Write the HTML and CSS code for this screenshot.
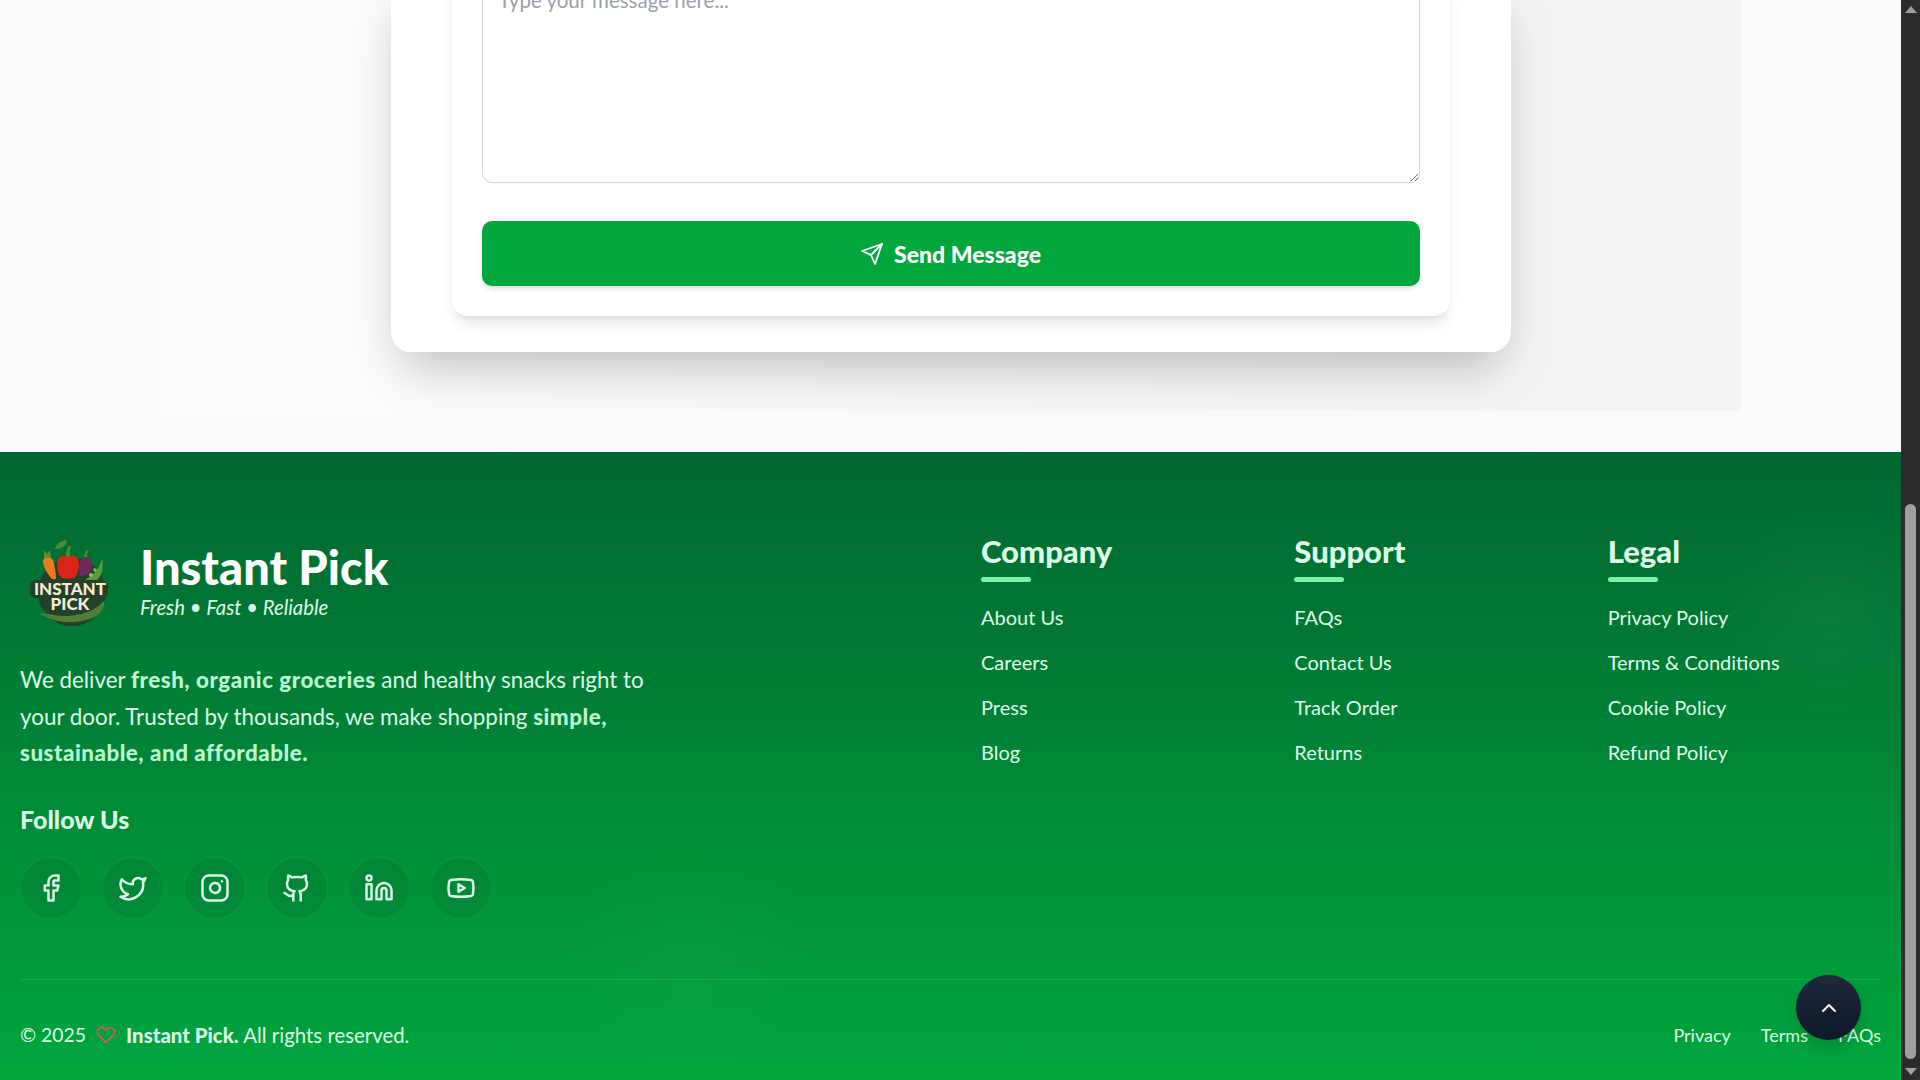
FILE: index.html
```html
<!DOCTYPE html>
<html>
<head>
    <title>Contact - Instant Pick</title>
    <meta charset="UTF-8">
    <link rel="stylesheet" href="styles.css">
</head>
<body>
    <div class="page">
        <main class="content">
            <section class="contact">
                <div class="contact-card">
                    <form class="contact-form">
                        <textarea class="message" placeholder="Type your message here..."></textarea>
                        <button class="send-btn" type="button">
                            <svg class="send-icon" viewBox="0 0 24 24"><path d="m22 2-7 20-4-9-9-4Z"/><path d="M22 2 11 13"/></svg>
                            Send Message
                        </button>
                    </form>
                </div>
            </section>
        </main>

        <footer class="footer">
            <div class="footer-grid">
                <div class="about">
                    <div class="brand">
                        <svg class="logo" viewBox="0 0 96 96">
                            <path d="M35 15c1-5 5-8 12-9-1 6-5 9-12 9z" fill="#4d8a3a"/>
                            <circle cx="52" cy="58" r="34" fill="#23402a"/>
                            <path d="M20 80c4-2 8 0 14 1 18 3 38-1 50-14 1 5-2 12-8 15-14 8-38 9-56-2z" fill="#4f7d33"/>
                            <path d="M24 25l0-9 3 4 3-4 1 9z" fill="#5b8f2e"/>
                            <path d="M23 26c3-3 8-3 10 0 2 7 3 13 3 19-2 1-4 0-5-1-4-5-8-11-8-18z" fill="#ee7a1f"/>
                            <path d="M46 23c0-4 1-8 2-11l3 0c-1 3-1 7-1 11z" fill="#4f8a2e"/>
                            <path d="M37 30c0-6 4-9 8-8 2 1 5 1 7 0 4-1 7 2 7 8 0 6-2 12-5 14-3 1-9 1-12 0-3-2-5-8-5-14z" fill="#d92418"/>
                            <path d="M64 23c0-3 1-5 3-7l2 1c-2 2-2 4-2 6z" fill="#4f8a2e"/>
                            <path d="M59 33c0-6 3-10 7-10 5 1 7 6 6 12-1 4-6 7-13 7z" fill="#6b2a5e"/>
                            <path d="M62 47c9-3 17-11 20-22 2 8 0 17-6 22-4 2-10 3-14 0z" fill="#5c9a35"/>
                            <circle cx="71" cy="41" r="2" fill="#8fc24f"/>
                            <circle cx="75" cy="36" r="1.8" fill="#8fc24f"/>
                            <rect x="10" y="46" width="78" height="18" rx="6" fill="#23402a"/>
                            <text class="logo-text" x="50" y="61" text-anchor="middle" font-size="17">INSTANT</text>
                            <text class="logo-text" x="50" y="76" text-anchor="middle" font-size="17">PICK</text>
                        </svg>
                        <div class="brand-text">
                            <h2 class="brand-name">Instant Pick</h2>
                            <p class="tagline">Fresh • Fast • Reliable</p>
                        </div>
                    </div>
                    <p class="about-text">We deliver <strong>fresh, organic groceries</strong> and healthy snacks right to your door. Trusted by thousands, we make shopping <strong>simple, sustainable, and affordable.</strong></p>
                    <h3 class="follow-title">Follow Us</h3>
                    <div class="socials">
                        <a class="social"><svg viewBox="0 0 24 24"><path d="M18 2h-3a5 5 0 0 0-5 5v3H7v4h3v8h4v-8h3l1-4h-4V7a1 1 0 0 1 1-1h3z"/></svg></a>
                        <a class="social"><svg viewBox="0 0 24 24"><path d="M22 4s-.7 2.1-2 3.4c1.6 10-9.4 17.3-18 11.6 2.2.1 4.4-.6 6-2C3 15.5.5 9.6 3 5c2.2 2.6 5.6 4.1 9 4-.9-4.2 4-6.6 7-3.8 1.1 0 3-1.2 3-1.2z"/></svg></a>
                        <a class="social"><svg viewBox="0 0 24 24"><rect x="2" y="2" width="20" height="20" rx="5"/><path d="M16 11.37A4 4 0 1 1 12.63 8 4 4 0 0 1 16 11.37z"/><path d="M17.5 6.5h.01"/></svg></a>
                        <a class="social"><svg viewBox="0 0 24 24"><path d="M15 22v-4a4.8 4.8 0 0 0-1-3.5c3 0 6-2 6-5.5.08-1.25-.27-2.48-1-3.5.28-1.15.28-2.35 0-3.5 0 0-1 0-3 1.5-2.64-.5-5.36-.5-8 0C6 2 5 2 5 2c-.3 1.15-.3 2.35 0 3.5A5.403 5.403 0 0 0 4 9c0 3.5 3 5.5 6 5.5-.39.49-.68 1.05-.85 1.65-.17.6-.22 1.23-.15 1.85v4"/><path d="M9 18c-4.51 2-5-2-7-2"/></svg></a>
                        <a class="social"><svg viewBox="0 0 24 24"><path d="M16 8a6 6 0 0 1 6 6v7h-4v-7a2 2 0 0 0-2-2 2 2 0 0 0-2 2v7h-4v-7a6 6 0 0 1 6-6z"/><rect x="2" y="9" width="4" height="12"/><circle cx="4" cy="4" r="2"/></svg></a>
                        <a class="social"><svg viewBox="0 0 24 24"><path d="M2.5 17a24.12 24.12 0 0 1 0-10 2 2 0 0 1 1.4-1.4 49.56 49.56 0 0 1 16.2 0A2 2 0 0 1 21.5 7a24.12 24.12 0 0 1 0 10 2 2 0 0 1-1.4 1.4 49.55 49.55 0 0 1-16.2 0A2 2 0 0 1 2.5 17"/><path d="m10 15 5-3-5-3z"/></svg></a>
                    </div>
                </div>

                <div class="links-col">
                    <h3 class="col-title">Company</h3>
                    <ul class="links">
                        <li>About Us</li>
                        <li>Careers</li>
                        <li>Press</li>
                        <li>Blog</li>
                    </ul>
                </div>
                <div class="links-col">
                    <h3 class="col-title">Support</h3>
                    <ul class="links">
                        <li>FAQs</li>
                        <li>Contact Us</li>
                        <li>Track Order</li>
                        <li>Returns</li>
                    </ul>
                </div>
                <div class="links-col">
                    <h3 class="col-title">Legal</h3>
                    <ul class="links">
                        <li>Privacy Policy</li>
                        <li>Terms &amp; Conditions</li>
                        <li>Cookie Policy</li>
                        <li>Refund Policy</li>
                    </ul>
                </div>
            </div>

            <div class="footer-bottom">
                <p class="copyright">
                    <span class="year">© 2025</span>
                    <svg class="heart" viewBox="0 0 24 24"><path d="M20.84 4.61a5.5 5.5 0 0 0-7.78 0L12 5.67l-1.06-1.06a5.5 5.5 0 0 0-7.78 7.78l1.06 1.06L12 21.23l7.78-7.78 1.06-1.06a5.5 5.5 0 0 0 0-7.78z"/></svg>
                    <span class="rights"><strong>Instant Pick.</strong> All rights reserved.</span>
                </p>
                <div class="bottom-links">
                    <a>Privacy</a>
                    <a>Terms</a>
                    <a>FAQs</a>
                </div>
            </div>

            <button class="to-top" type="button">
                <svg viewBox="0 0 24 24"><path d="m18 15-6-6-6 6"/></svg>
            </button>
        </footer>
    </div>

    <div class="scrollbar">
        <span class="arrow-up"></span>
        <span class="thumb"></span>
        <span class="arrow-down"></span>
    </div>
</body>
</html>
```

FILE: styles.css
```css
* {
    box-sizing: border-box;
}
html, body {
    margin: 0;
    height: 100%;
    overflow: hidden;
}
body {
    display: flex;
    font-family: 'Lato', 'Noto Sans', sans-serif;
    background-color: #f9fafb;
}
h2, h3, p, ul {
    margin: 0;
    padding: 0;
}
.page {
    flex: 1;
    min-width: 0;
    height: 100%;
    display: flex;
    flex-direction: column;
    justify-content: flex-end;
    overflow: hidden;
}

/* contact part, only its lower end is in view */
.content {
    padding-bottom: 41px;
}
.contact {
    width: 1581px;
    margin: 0 auto;
    padding-bottom: 59px;
    background: linear-gradient(90deg, #fbfbfb 0%, #fafbfb 14%, #f3f4f6 85%);
}
.contact-card {
    width: 1120px;
    margin: 0 auto;
    padding: 0 61px 36px;
    background-color: #fff;
    border-radius: 0 0 20px 20px;
    box-shadow: 0 25px 50px -12px rgba(0, 0, 0, 0.25);
}
.contact-form {
    padding: 0 30px 30px;
    background-color: #fff;
    border-radius: 0 0 16px 16px;
    box-shadow: 0 10px 15px -3px rgba(0, 0, 0, 0.1), 0 4px 6px -4px rgba(0, 0, 0, 0.1);
}
.message {
    display: block;
    width: 100%;
    height: 206px;
    padding: 9px 16px;
    font-family: inherit;
    font-size: 20.5px;
    line-height: 26px;
    border: 1px solid #d1d5dc;
    border-radius: 10px;
    outline: none;
    background-color: #fff;
}
.message::placeholder {
    color: #99a1af;
}
.send-btn {
    width: 100%;
    height: 65px;
    margin-top: 38px;
    display: flex;
    align-items: center;
    justify-content: center;
    gap: 10px;
    font-family: inherit;
    font-size: 23px;
    font-weight: 900;
    color: #fff;
    background-color: #00a63e;
    border: none;
    border-radius: 10px;
    box-shadow: 0 4px 6px -1px rgba(0, 0, 0, 0.1), 0 2px 4px -2px rgba(0, 0, 0, 0.1);
}
.send-icon {
    width: 24px;
    height: 24px;
    fill: none;
    stroke: #fff;
    stroke-width: 1.8;
    stroke-linecap: round;
    stroke-linejoin: round;
}

/* footer */
.footer {
    position: relative;
    flex-shrink: 0;
    height: 628px;
    padding: 82px 20px 31px;
    color: #dcfce7;
    background:
        radial-gradient(circle 110px at 1830px 160px, rgba(255, 255, 255, 0.04), transparent),
        radial-gradient(circle 130px at 690px 500px, rgba(255, 255, 255, 0.025), transparent),
        linear-gradient(180deg, #016630 0%, #00a63e 100%);
}
.footer-grid {
    display: grid;
    grid-template-columns: 921px repeat(3, 1fr);
    column-gap: 40px;
}
.brand {
    display: flex;
    align-items: center;
    gap: 24px;
}
.logo {
    width: 96px;
    height: 96px;
}
.logo-text {
    font-family: 'Lato', sans-serif;
    font-weight: 900;
    fill: #f3ecd2;
}
.brand-text {
    margin-bottom: 6px;
}
.brand-name {
    font-size: 47px;
    line-height: 56px;
    font-weight: 900;
    color: #fff;
}
.tagline {
    font-size: 20.3px;
    line-height: 24px;
    font-style: italic;
}
.about-text {
    max-width: 660px;
    margin-top: 32px;
    font-size: 22.4px;
    line-height: 36.6px;
}
.about-text strong {
    color: #b9f8cf;
    font-weight: 900;
    letter-spacing: 0.5px;
}
.follow-title {
    margin-top: 31px;
    font-size: 25px;
    line-height: 32px;
    font-weight: 900;
}
.socials {
    display: flex;
    gap: 20px;
    margin-top: 22px;
}
.social {
    width: 62px;
    height: 62px;
    display: flex;
    align-items: center;
    justify-content: center;
    border-radius: 50%;
    background-color: rgba(1, 102, 48, 0.25);
    border: 1px solid rgba(0, 166, 62, 0.6);
}
.social svg {
    width: 30px;
    height: 30px;
    fill: none;
    stroke: #dcfce7;
    stroke-width: 2;
    stroke-linecap: round;
    stroke-linejoin: round;
}
.col-title {
    margin-top: -1px;
    font-size: 31px;
    line-height: 36px;
    font-weight: 900;
}
.col-title::after {
    content: "";
    display: block;
    width: 50px;
    height: 5px;
    margin-top: 8px;
    border-radius: 3px;
    background-color: #7bf1a8;
}
.links {
    list-style: none;
    margin-top: 22px;
    font-size: 20px;
    line-height: 27px;
}
.links li {
    margin-bottom: 18px;
}

.footer-bottom {
    margin-top: 60px;
    padding-top: 41px;
    border-top: 1px solid rgba(123, 241, 168, 0.15);
    display: flex;
    align-items: center;
    justify-content: space-between;
}
.copyright {
    display: flex;
    align-items: center;
    gap: 10px;
    font-size: 20.4px;
    line-height: 28px;
}
.copyright strong {
    font-weight: 900;
}
.year {
    font-size: 19.4px;
}
.heart {
    width: 20px;
    height: 20px;
    fill: none;
    stroke: #d9575a;
    stroke-width: 2;
}
.bottom-links {
    display: flex;
    gap: 30px;
    font-size: 18px;
    line-height: 28px;
}
.to-top {
    position: absolute;
    left: 1796px;
    top: 523px;
    width: 65px;
    height: 65px;
    display: flex;
    align-items: center;
    justify-content: center;
    border: none;
    border-radius: 50%;
    background: linear-gradient(180deg, #1e293b, #0f172a);
    box-shadow: 0 8px 16px rgba(0, 0, 0, 0.15);
}
.to-top svg {
    width: 24px;
    height: 24px;
    fill: none;
    stroke: #fff;
    stroke-width: 2;
    stroke-linecap: round;
    stroke-linejoin: round;
}

/* scrollbar strip */
.scrollbar {
    width: 19px;
    flex-shrink: 0;
    height: 100%;
    display: flex;
    flex-direction: column;
    align-items: center;
    background-color: #2c2c2c;
}
.arrow-up {
    width: 0;
    height: 0;
    margin-top: 6px;
    border-left: 6px solid transparent;
    border-right: 6px solid transparent;
    border-bottom: 7px solid #a0a0a0;
}
.thumb {
    width: 11px;
    height: 555px;
    margin-top: auto;
    border-radius: 6px;
    background-color: #9f9f9f;
}
.arrow-down {
    width: 0;
    height: 0;
    margin: 9px 0 5px;
    border-left: 6px solid transparent;
    border-right: 6px solid transparent;
    border-top: 7px solid #a0a0a0;
}
```
